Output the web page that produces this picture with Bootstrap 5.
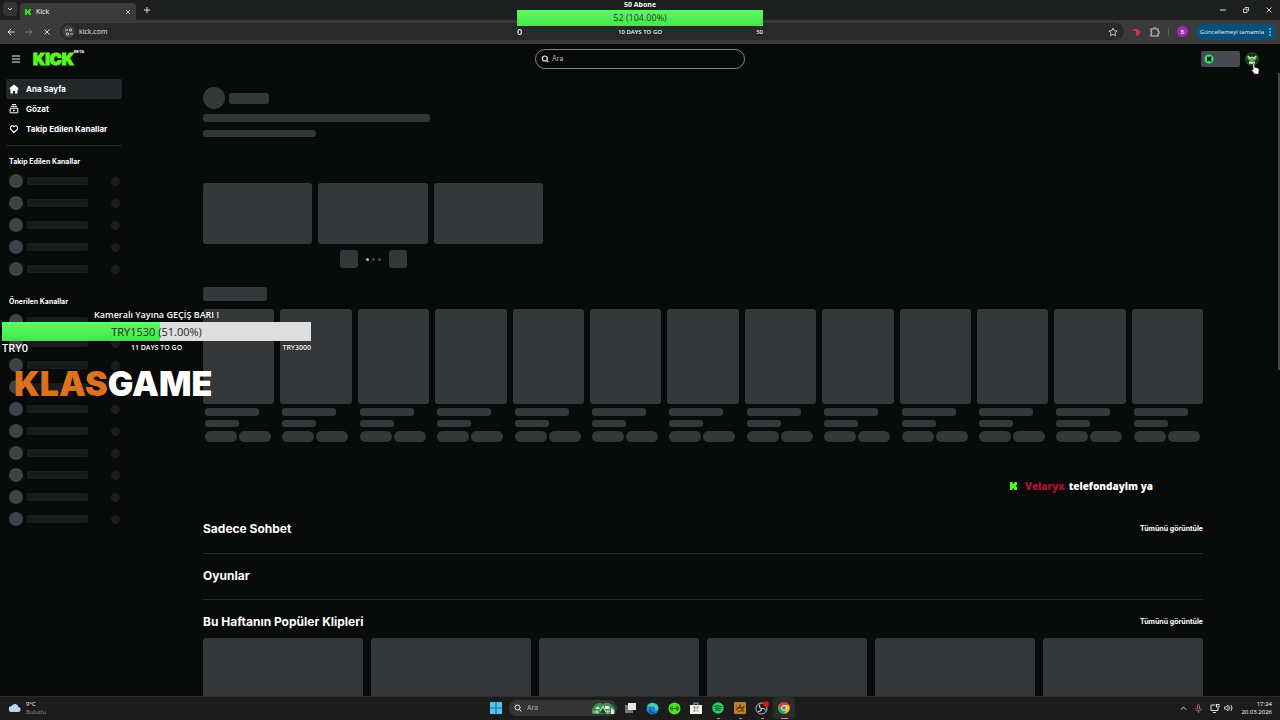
<!DOCTYPE html>
<html lang="tr" data-bs-theme="dark">
<head>
<meta charset="utf-8">
<meta name="viewport" content="width=device-width, initial-scale=1">
<title>Kick</title>
<link href="https://cdn.jsdelivr.net/npm/bootstrap@5.3.0/dist/css/bootstrap.min.css" rel="stylesheet">
<style>
  body { font-family: Inter, "Liberation Sans", sans-serif; font-size: 8px; line-height: 12px; background: #090a0a; color: #fff; }
  button { background: none; border: 0; padding: 0; color: inherit; font: inherit; display: inline-flex; align-items: center; justify-content: center; }
  svg { display: block; flex: none; }
  a { color: inherit; text-decoration: none; }
  .ui { font-family: "Open Sans", "Noto Sans", sans-serif; }
  .w22 { width: 22px; }

  /* browser chrome */
  .tabstrip { height: 20px; background: #1e2020; padding-left: 3px; }
  .tab-menu { width: 14px; height: 14px; border-radius: 4px; background: #343535; }
  .tab { width: 116px; height: 17px; border-radius: 4px 4px 0 0; background: #3b3b3b; margin-left: 3px; padding: 0 5px 0 4px; font-size: 7px; }
  .win-btn { width: 23px; height: 20px; }
  .toolbar { height: 24px; background: #3b3b3b; padding: 0 4px 1px 2px; }
  .tool-btn { width: 18px; height: 18px; }
  .omnibox { height: 17px; border-radius: 9px; background: #282929; padding: 0 6px 0 2px; margin-left: 4px; font-size: 7px; }
  .omnibox input { background: none; border: 0; outline: 0; color: #e4e4e4; padding: 0; }
  .site-dot { width: 13px; height: 13px; border-radius: 50%; background: #3c3d3d; }
  .divider-v { width: 1px; height: 8px; background: #5c5c5c; }
  .profile { width: 11px; height: 11px; border-radius: 50%; background: #a02bb0; font-size: 6px; }
  .update { height: 16px; border-radius: 8px; background: #07507c; color: #e6f4fc; padding: 0 5px 0 4px; gap: 5px; font-size: 6px; }

  /* site header */
  .site-head { height: 29px; padding: 0 7px; }
  .side { flex: 1 1 0; }
  .brand { font-weight: 900; font-size: 16px; line-height: 20px; color: #53fc18; -webkit-text-stroke: 1px #53fc18; }
  .beta { font-size: 4px; line-height: 6px; font-weight: 700; }
  .search { width: 210px; height: 20px; border: 1px solid #858788; border-radius: 10px; padding: 0 5px; gap: 3px; }
  .search input { background: none; border: 0; outline: 0; padding: 0; color: #fff; font-size: 7px; }
  .search input::placeholder, .task-search input::placeholder { color: #b4b6b7; opacity: 1; }
  .wallet { width: 39px; height: 16px; border-radius: 2px; background: #474b4f; padding-left: 3px; margin-right: 5px; }
  .account { margin-right: 14px; }
  .pointer { position: absolute; top: 11px; left: 6px; z-index: 3; }

  /* sidebar */
  .sidebar { width: 128px; padding: 6px 6px 0; flex: none; }
  .side-link { height: 20px; padding: 0 3px; gap: 7px; font-size: 8px; font-weight: 700; border-radius: 2px; }
  .side-link.active { background: #24272a; }
  .rule { height: 1px; background: #24272a; }
  .side-title { font-size: 7px; line-height: 17px; font-weight: 700; padding-left: 3px; margin: 13px 0 0; }
  .side-links { padding-bottom: 6px; }
  .side-title.first { margin-top: 7px; }
  .chan { height: 22px; padding: 0 2px 0 3px; }
  .chan i { display: block; background: #1b1c1e; }
  .chan .face { width: 14px; height: 14px; border-radius: 50%; background: #3f424b; }
  .chan .name { width: 61px; height: 8px; border-radius: 2px; margin-left: 4px; }
  .chan .live { width: 9px; height: 9px; border-radius: 50%; margin-left: auto; }

  /* content skeletons */
  .content { padding: 14px 75px 0; min-width: 0; overflow: hidden; }
  .sk { display: block; background: #35383a; border-radius: 3px; }
  .sk-avatar { width: 22px; height: 22px; border-radius: 50%; }
  .sk-user { width: 40px; height: 11px; }
  .sk-title { width: 227px; height: 8px; margin-top: 5px; }
  .sk-sub { width: 113px; height: 7px; }
  .featured { width: 34%; margin-top: 46px; }
  .gap-6px { gap: 6px; }
  .sk-stream { height: 61px; }
  .pager { gap: 3px; margin-top: 6px; }
  .sk-arrow { width: 18px; height: 18px; }
  .dots { gap: 3px; padding: 0 5px; }
  .dot { width: 3px; height: 3px; border-radius: 50%; background: #4a4c4e; }
  .dot.on { background: #b5b7b8; }
  .sk-heading { width: 64px; height: 14px; margin-top: 19px; }
  .sk-cover { height: 95px; }
  .cat-meta { padding: 4px 2px 0; }
  .sk-name { width: 54px; height: 8px; }
  .sk-count { width: 34px; height: 7px; }
  .tags { gap: 2px; }
  .pill { width: 32px; height: 11px; border-radius: 6px; }
  .sections { margin-top: 77px; }
  .section-row { padding-bottom: 14px; border-bottom: 1px solid #24272a; margin-bottom: 12px; }
  .section-row + .section-row { padding-bottom: 13px; }
  .section-title { font-size: 12px; line-height: 20px; font-weight: 700; margin: 0; }
  .more { font-size: 7px; font-weight: 700; }
  .clips { margin-top: 6px; }
  .sk-clip { height: 90px; }
  .scroll-thumb { width: 2px; height: 297px; background: #47494a; flex: none; }

  /* stream overlays */
  .overlay { position: absolute; z-index: 5; text-shadow: 0 0 2px #000; }
  .goal-top { top: 0; left: 50%; width: 246px; margin-left: -123px; }
  .goal-top .goal-name { font-size: 7px; line-height: 10px; font-weight: 700; }
  .goal-top .goal-foot { font-size: 6px; line-height: 12px; font-weight: 600; }
  .goal-top .goal-start { font-size: 9px; }
  .goal-left { top: 308px; left: 2px; width: 309px; }
  .goal-left .goal-name { font-size: 9px; line-height: 14px; font-weight: 600; }
  .goal-left .goal-foot { font-size: 7px; line-height: 14px; font-weight: 600; }
  .goal-left .goal-start { font-size: 11px; }
  .goal-bar { background: linear-gradient(#59ff60, #46e34d); color: #10451a; text-shadow: none; font-size: 9px; line-height: 16px; }
  .track { background: #dedede; height: 19px; position: relative; color: #202a20; text-shadow: none; font-size: 11px; line-height: 19px; }
  .track span { position: relative; }
  .fill { position: absolute; inset: 0 auto 0 0; background: linear-gradient(#59ff60, #46e34d); }
  .logo-text { top: 364px; left: 14px; font-weight: 900; font-size: 34px; line-height: 40px; text-shadow: none; }
  .logo-text span { color: #de711e; }
  .chat { top: 478px; right: 127px; font-weight: 800; font-size: 10px; line-height: 16px; }
  .chat .nick { color: #b30f38; }

  /* taskbar */
  .taskbar { height: 24px; background: #1c1c1c; border-top: 1px solid #2c2c2c; position: relative; z-index: 6; padding-bottom: 1px; }
  .task-search { width: 108px; height: 16px; border-radius: 8px; background: #343535; padding: 0 1px 0 5px; gap: 5px; }
  .task-search input { background: none; border: 0; outline: 0; padding: 0; font-size: 7px; min-width: 0; }
  .task-main { gap: 2px; }
  .task-btn { width: 22px; height: 22px; border-radius: 3px; position: relative; }
  .task-btn.open::after { content: ""; position: absolute; bottom: 0; width: 3px; height: 1px; background: #9a9a9a; }
  .task-btn.current { background: #2b2b2b; }
  .task-btn.current::after { width: 7px; background: #e58a7c; }
  .tiny { font-size: 6px; line-height: 8px; }
</style>
</head>
<body class="vh-100 d-flex flex-column overflow-hidden position-relative">

<div class="tabstrip d-flex align-items-end flex-shrink-0 ui">
  <button class="tab-menu mb-1" aria-label="Sekmelerde ara"><svg width="6" height="6" viewBox="0 0 6 6" fill="none" stroke="#ddd"><path d="M1 2l2 2 2-2"/></svg></button>
  <div class="tab d-flex align-items-center">
    <svg width="8" height="8" viewBox="0 0 8 8"><path fill="#2ee61c" d="M1 1h2v2h1V2h1V1h2v2H6v2h1v2H5V6H4V5H3v2H1z"/></svg>
    <span class="ms-1 flex-grow-1">Kick</span>
    <button aria-label="Sekmeyi kapat"><svg width="6" height="6" viewBox="0 0 6 6" stroke="#ddd" stroke-width=".8"><path d="M1 1l4 4M5 1L1 5"/></svg></button>
  </div>
  <button class="w22 h-100" aria-label="Yeni sekme"><svg width="6" height="6" viewBox="0 0 6 6" stroke="#ddd"><path d="M3 0v6M0 3h6"/></svg></button>
  <div class="ms-auto d-flex">
    <button class="win-btn" aria-label="Simge durumuna küçült"><svg width="6" height="6" viewBox="0 0 6 6" stroke="#ddd"><path d="M0 3h6"/></svg></button>
    <button class="win-btn" aria-label="Geri yükle"><svg width="6" height="6" viewBox="0 0 6 6" stroke="#ddd" stroke-width=".9" fill="none"><path d="M.5 2h3.500v3.500H.5zM2 .5h3.500V4"/></svg></button>
    <button class="win-btn" aria-label="Kapat"><svg width="6" height="6" viewBox="0 0 6 6" stroke="#ddd" stroke-width=".9"><path d="M.5.5l5 5M5.500.5l-5 5"/></svg></button>
  </div>
</div>

<div class="toolbar d-flex align-items-center flex-shrink-0 ui">
  <button class="tool-btn" aria-label="Geri"><svg width="8" height="8" viewBox="0 0 8 8" fill="none" stroke="#ddd"><path d="M7.500 4H1M4 1L1 4l3 3"/></svg></button>
  <button class="tool-btn" aria-label="İleri"><svg width="8" height="8" viewBox="0 0 8 8" fill="none" stroke="#777"><path d="M.5 4H7M4 1l3 3-3 3"/></svg></button>
  <button class="tool-btn" aria-label="Durdur"><svg width="6" height="6" viewBox="0 0 6 6" stroke="#ddd"><path d="M.5.5l5 5M5.500.5l-5 5"/></svg></button>
  <div class="omnibox d-flex align-items-center flex-grow-1">
    <button class="site-dot" aria-label="Site bilgileri"><svg width="8" height="8" viewBox="0 0 8 8" fill="none" stroke="#ddd" stroke-width=".9"><path d="M0 2h3M5 6h3"/><circle cx="5.500" cy="2" r="1.200"/><circle cx="2.500" cy="6" r="1.200"/></svg></button>
    <input class="flex-grow-1 ms-1" type="text" value="kick.com" aria-label="Adres">
    <button aria-label="Yer işareti"><svg width="10" height="10" viewBox="0 0 10 10" fill="none" stroke="#ccc" stroke-width=".9"><path d="M5 1l1.200 2.700 2.900.3-2.200 1.900.7 2.900L5 7.300 2.400 8.800l.7-2.900L.9 4l2.900-.3z"/></svg></button>
  </div>
  <div class="d-flex align-items-center">
    <button class="tool-btn ms-1" aria-label="Uzantı"><svg width="8" height="8" viewBox="0 0 8 8" fill="#dc2f3b"><path d="M0 1h5v1.500h2.500L7 5 5.500 7.500H3V3H0z"/></svg></button>
    <button class="tool-btn" aria-label="Uzantılar"><svg width="10" height="10" viewBox="0 0 10 10" fill="none" stroke="#ccc" stroke-width="1.100"><path d="M1 2h2.500a1.200 1.200 0 0 1 2.400 0H8v2.300a1.200 1.200 0 0 1 0 2.400V9H1V6.700a1.300 1.300 0 0 0 0-2.400z"/></svg></button>
    <span class="divider-v ms-1"></span>
    <button class="profile ms-2" aria-label="Profil">B</button>
    <button class="update ms-2">Güncellemeyi tamamla <svg width="2" height="8" viewBox="0 0 2 8" fill="#d8ecf8"><circle cx="1" cy="1" r=".8"/><circle cx="1" cy="4" r=".8"/><circle cx="1" cy="7" r=".8"/></svg></button>
  </div>
</div>

<header class="site-head d-flex align-items-center flex-shrink-0">
  <div class="side d-flex align-items-center">
    <button class="w22 justify-content-start ps-1" aria-label="Menü"><svg width="10" height="8" viewBox="0 0 10 8" stroke="#eee" stroke-width="1.200"><path d="M1 1h8M1 4h8M1 7h8"/></svg></button>
    <a href="#" class="d-flex ms-1"><span class="brand">KICK</span><span class="beta">BETA</span></a>
  </div>
  <label class="search d-flex align-items-center">
    <svg width="8" height="8" viewBox="0 0 8 8" fill="none" stroke="#eee" stroke-width="1.200"><circle cx="3.800" cy="3.500" r="2.500"/><path d="M5.500 5.300l1.800 1.900"/></svg>
    <input class="flex-grow-1" type="search" placeholder="Ara" aria-label="Ara">
  </label>
  <div class="side d-flex align-items-center justify-content-end">
    <button class="wallet justify-content-start" aria-label="Cüzdan"><svg width="10" height="10" viewBox="0 0 10 10"><circle cx="5" cy="5" r="4.500" fill="#2dea84"/><path fill="#07140a" d="M3 2.500h1.500V4L6 2.500h1.500v1.500l-1 1 1 1v1.500H6L4.500 6v1.500H3z"/></svg></button>
    <div class="account position-relative">
      <button class="d-flex" aria-label="Hesap"><svg width="14" height="14" viewBox="0 0 14 14"><circle cx="7" cy="7" r="6.300" fill="#143010" stroke="#24701a"/><path d="M2 4l3 2h4l3-2-1 4-3 1H6L3 8z" fill="#5fae50"/><path d="M3 4l2 2 2-1 2 1 2-2M4 10h6M4 11.500l1-1 1 1 1-1 1 1 1-1 1 1" stroke="#dce8d4" stroke-width="1.100" fill="none"/></svg></button>
      <svg class="pointer" width="9" height="12" viewBox="0 0 9 12"><path fill="#fff" stroke="#222" stroke-width=".5" d="M2 1q1-1 1.500 0v3.500q1-.6 1.500.3 1-.4 1.400.5 1.600-.1 1.600 1.400L7.500 11h-4L.6 7.300q0-1 1.400-.3z"/></svg>
    </div>
  </div>
</header>

<div class="d-flex flex-grow-1 overflow-hidden">
  <aside class="sidebar">
    <nav class="side-links">
      <a href="#" class="side-link active d-flex align-items-center"><svg width="10" height="10" viewBox="0 0 10 10" fill="#fff"><path d="M5 .5L9.300 4v1.500H8.500V9.500H6V7H4v2.500H1.500V5.500H.7V4z"/></svg><span>Ana Sayfa</span></a>
      <a href="#" class="side-link d-flex align-items-center"><svg width="10" height="10" viewBox="0 0 10 10" fill="none" stroke="#fff"><path d="M3 .6h4M2 2.300h6M1.200 4.200h7.600v4.600H1.200z"/><path d="M4.200 5.200v2.600L6.300 6.500z" fill="#fff" stroke="none"/></svg><span>Gözat</span></a>
      <a href="#" class="side-link d-flex align-items-center"><svg width="10" height="10" viewBox="0 0 10 10" fill="none" stroke="#fff" stroke-width="1.100"><path d="M5 8.500L1.600 5.200V2.900L2.800 1.800H4l1 1 1-1h1.200l1.200 1.100v2.300z"/></svg><span>Takip Edilen Kanallar</span></a>
    </nav>
    <div class="rule"></div>
    <h2 class="side-title first">Takip Edilen Kanallar</h2>
    <div id="followed"></div>
    <h2 class="side-title">Önerilen Kanallar</h2>
    <div id="suggested"></div>
  </aside>

  <main class="content flex-grow-1">
    <div class="d-flex align-items-center"><span class="sk sk-avatar"></span><span class="sk sk-user ms-1"></span></div>
    <span class="sk sk-title"></span>
    <span class="sk sk-sub mt-2"></span>
    <div class="featured">
      <div class="d-flex gap-6px"><span class="sk sk-stream flex-fill"></span><span class="sk sk-stream flex-fill"></span><span class="sk sk-stream flex-fill"></span></div>
      <div class="pager d-flex align-items-center justify-content-center">
        <span class="sk sk-arrow"></span>
        <div class="dots d-flex"><span class="dot on"></span><span class="dot"></span><span class="dot"></span></div>
        <span class="sk sk-arrow"></span>
      </div>
    </div>
    <span class="sk sk-heading"></span>
    <div class="d-flex gap-6px mt-2" id="categories"></div>

    <div class="sections">
      <section class="section-row d-flex align-items-center justify-content-between"><h2 class="section-title">Sadece Sohbet</h2><a class="more" href="#">Tümünü görüntüle</a></section>
      <section class="section-row"><h2 class="section-title">Oyunlar</h2></section>
      <section>
        <div class="d-flex align-items-center justify-content-between"><h2 class="section-title">Bu Haftanın Popüler Klipleri</h2><a class="more" href="#">Tümünü görüntüle</a></div>
        <div class="clips d-flex gap-2" id="clips"></div>
      </section>
    </div>
  </main>
  <div class="scroll-thumb"></div>
</div>

<footer class="taskbar d-flex align-items-center ui flex-shrink-0">
  <div class="side d-flex align-items-center ps-2">
    <svg width="14" height="10" viewBox="0 0 14 10"><path fill="#bcd1f4" d="M4 9a3 3 0 0 1-.3-6A3.600 3.600 0 0 1 10.500 4 2.600 2.600 0 0 1 11 9z"/></svg>
    <div class="tiny ms-1">9°C<br><span class="text-white-50">Bulutlu</span></div>
  </div>
  <div class="task-main d-flex align-items-center">
    <button class="task-btn" aria-label="Başlat"><svg width="12" height="12" viewBox="0 0 12 12"><path fill="#4cc5f5" d="M0 0h5.700v5.700H0zM6.300 0H12v5.700H6.300zM0 6.300h5.700V12H0zM6.300 6.300H12V12H6.300z"/></svg></button>
    <label class="task-search d-flex align-items-center">
      <svg width="8" height="8" viewBox="0 0 8 8" fill="none" stroke="#eee"><circle cx="3.500" cy="3.500" r="2.500"/><path d="M5.300 5.300L7.500 7.500"/></svg>
      <input class="flex-grow-1" type="search" placeholder="Ara" aria-label="Windows'ta ara">
      <svg width="25" height="13" viewBox="0 0 25 13"><path fill="#3f8d55" d="M1 12Q0 6 5 2q4-2 7 0 5-3 9 1 4 3 3 9z"/><path d="M4 7l3-3 2 3zM14 4h4l1 3h-5zM20 6l3 2v4h-3z" fill="#dfeede"/><path d="M2 10h6M9 9l3-5 3 6 4-1M6 8v4M17 8v4" stroke="#c9e3c9" fill="none"/><path d="M9 11l3-4 3 5" fill="#124b2c"/></svg>
    </label>
    <div class="d-flex">
      <button class="task-btn" aria-label="Görev görünümü"><svg width="13" height="12" viewBox="0 0 13 12"><path fill="#777" d="M1 3h8v8H1z"/><path fill="#e5e5e5" d="M4 1h8v7H4z"/></svg></button>
      <button class="task-btn" aria-label="Edge"><svg width="13" height="13" viewBox="0 0 13 13"><circle cx="6.500" cy="6.500" r="6" fill="#1b86d8"/><path fill="#48d0b0" d="M1 5a6 6 0 0 1 11.500 1Q12 9 9 8.500q1.500-4-3-4Q3 4 1 5z"/><path fill="#0d55a0" d="M5 6q-1 5 6 5Q7 13 4 10.500 2 7 5 6z"/></svg></button>
      <button class="task-btn" aria-label="Hamachi"><svg width="13" height="13" viewBox="0 0 13 13"><circle cx="6.500" cy="6.500" r="6" fill="#53e21e"/><path d="M4 4v5M9 4v5M4 6.500h5M2.500 5.500v2M10.500 5.500v2" stroke="#176b0b" stroke-width="1.200"/></svg></button>
      <button class="task-btn" aria-label="Microsoft Store"><svg width="12" height="12" viewBox="0 0 12 12"><path d="M4 3V1h4v2" fill="none" stroke="#72bce8"/><path fill="#f2f2f2" d="M0 3h12v9H0z"/><path fill="#e34e32" d="M3.500 4.500h2v2h-2z"/><path fill="#6ab32d" d="M6.500 4.500h2v2h-2z"/><path fill="#299bdc" d="M3.500 7.500h2v2h-2z"/><path fill="#f0b21c" d="M6.500 7.500h2v2h-2z"/></svg></button>
      <button class="task-btn open" aria-label="Spotify"><svg width="12" height="12" viewBox="0 0 12 12"><circle cx="6" cy="6" r="5.700" fill="#1fd760"/><path d="M2.500 4.200q3.500-1.200 7 .5M3 6.200q3-1 5.800.5M3.400 8q2.500-.8 4.600.4" fill="none" stroke="#103b1f" stroke-linecap="round"/></svg></button>
      <button class="task-btn open" aria-label="Oyun"><svg width="12" height="12" viewBox="0 0 12 12"><rect width="12" height="12" rx="1" fill="#c47c24"/><path d="M2 3l3 1 1-2 2 2h3L9 7l1 3-3-1-3 1V8H2l1-2z" fill="#6b3a10"/><path d="M3 4h2M7 4h2M4 8l3-1" stroke="#f3b957"/></svg></button>
      <button class="task-btn open" aria-label="OBS"><svg width="14" height="14" viewBox="0 0 14 14"><circle cx="6.500" cy="7.500" r="5.500" fill="#191919" stroke="#c4c4c4"/><path d="M6.500 7.500q-3-1-1.500-4M6.500 7.500q3-1 4 2M6.500 7.500q0 3-3.500 3" stroke="#d0d0d0" fill="none" stroke-width="1.200"/><circle cx="11" cy="3" r="2.800" fill="#e01919"/></svg></button>
      <button class="task-btn open current" aria-label="Chrome"><svg width="12" height="12" viewBox="0 0 12 12"><circle cx="6" cy="6" r="5.800" fill="#f4c20d"/><path fill="#e33b2e" d="M1 3a5.800 5.800 0 0 1 10.100 0H6L3.500 7z"/><path fill="#2da94f" d="M1 3a5.800 5.800 0 0 0 4.700 8.800L8.500 7.500H3.600z"/><circle cx="6" cy="6" r="2.700" fill="#fff"/><circle cx="6" cy="6" r="2.100" fill="#3f7fe8"/></svg></button>
    </div>
  </div>
  <div class="side d-flex align-items-center justify-content-end gap-2 pe-2">
    <svg width="7" height="6" viewBox="0 0 7 6" fill="none" stroke="#ddd"><path d="M1 4.500L3.500 2 6 4.500"/></svg>
    <svg width="7" height="9" viewBox="0 0 7 9" fill="none" stroke="#a66a5c"><rect x="2.500" y=".5" width="2" height="4.500" rx="1"/><path d="M.5 4q0 3 3 3t3-3M3.500 7v2"/></svg>
    <div class="d-flex align-items-center gap-1"><svg width="10" height="9" viewBox="0 0 10 9" fill="none" stroke="#ddd"><path d="M5.500 1H1v5.500h7V4M3 8.500h3"/><rect x="6.500" y=".5" width="2.500" height="2.500"/></svg>
    <svg width="9" height="8" viewBox="0 0 9 8" fill="none" stroke="#ddd" stroke-width=".9"><path d="M.5 3v2H2l2 2V1L2 3zM5.500 2.500q1 1.500 0 3M7 1q2 3 0 6"/></svg></div>
    <div class="tiny text-end">17:24<br>20.03.2026</div>
  </div>
</footer>

<div class="overlay goal-top ui text-center">
  <div class="goal-name">50 Abone</div>
  <div class="goal-bar">52 (104.00%)</div>
  <div class="goal-foot d-flex align-items-center justify-content-between"><span class="goal-start side text-start">0</span><span>10 DAYS TO GO</span><span class="side text-end">50</span></div>
</div>

<div class="overlay goal-left ui text-center">
  <div class="goal-name">Kameralı Yayına GEÇİŞ BARI !</div>
  <div class="track"><div class="fill" style="width:51%"></div><span>TRY1530 (51.00%)</span></div>
  <div class="goal-foot d-flex align-items-center justify-content-between"><span class="goal-start side text-start">TRY0</span><span>11 DAYS TO GO</span><span class="side text-end">TRY3000</span></div>
</div>

<div class="overlay logo-text"><span>KLAS</span>GAME</div>

<div class="overlay chat ui d-flex align-items-center">
  <svg class="me-2" width="7" height="8" viewBox="0 0 8 8" preserveAspectRatio="none"><path fill="#53fc18" d="M0 0h3v2h1V1h1V0h3v3H7v2h1v3H5V7H4V6H3v2H0z"/></svg>
  <span class="nick">Velaryx</span><span class="ms-1">telefondayim ya</span>
</div>

<script src="https://cdn.jsdelivr.net/npm/bootstrap@5.3.0/dist/js/bootstrap.bundle.min.js"></script>
<script>
  const channel = '<div class="chan d-flex align-items-center"><i class="face"></i><i class="name"></i><i class="live"></i></div>';
  const category = `<div class="flex-fill">
      <span class="sk sk-cover"></span>
      <div class="cat-meta">
        <span class="sk sk-name"></span>
        <span class="sk sk-count mt-1"></span>
        <div class="tags d-flex mt-1"><span class="sk pill"></span><span class="sk pill"></span></div>
      </div>
    </div>`;
  document.getElementById('followed').innerHTML = channel.repeat(5);
  document.getElementById('suggested').innerHTML = channel.repeat(10);
  document.getElementById('categories').innerHTML = category.repeat(13);
  document.getElementById('clips').innerHTML = '<span class="sk sk-clip flex-fill"></span>'.repeat(6);
</script>
</body>
</html>
